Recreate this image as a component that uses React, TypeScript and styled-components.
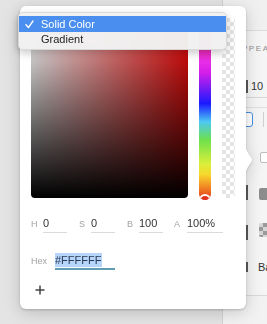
import React from "react";
import styled, { createGlobalStyle } from "styled-components";

const Global = createGlobalStyle`
  html, body { margin: 0; padding: 0; }
  body {
    width: 267px; height: 324px; overflow: hidden;
    font-family: "Liberation Sans", Arial, sans-serif;
    -webkit-font-smoothing: antialiased;
  }
`;

const Page = styled.div`
  position: relative;
  display: flex;
  width: 267px;
  height: 324px;
  overflow: hidden;
`;

const Canvas = styled.div`
  width: 222px;
  flex: none;
  background: #e4e4e4;
`;

const Inspector = styled.div`
  flex: 1;
  display: flex;
  flex-direction: column;
  background: #f5f5f5;
  border-left: 1px solid #d2d2d2;
`;

const InspectorHeader = styled.div`
  height: 30px;
  flex: none;
  border-bottom: 1px solid #dcdcdc;
  background: #f0f0f0;
`;

const SectionTitle = styled.div`
  margin: 13px 0 0 12px;
  font-size: 8px;
  line-height: 10px;
  letter-spacing: 1.6px;
  color: #8e8e8e;
  white-space: nowrap;
`;

const FieldRow = styled.div`
  margin: 26px 0 0 22px;
  height: 17px;
  display: flex;
  align-items: flex-start;
  border-bottom: 1px solid #d8d8d8;
`;

const Bar = styled.div<{ $h: number; $top?: number }>`
  width: 2px;
  height: ${(p) => p.$h}px;
  margin-top: ${(p) => p.$top ?? 0}px;
  background: #5a5a5a;
  flex: none;
`;

const FieldText = styled.span`
  margin-left: 3px;
  font-size: 11px;
  line-height: 13px;
  color: #333;
`;

const Divider = styled.div<{ $top: number }>`
  margin-top: ${(p) => p.$top}px;
  height: 0;
  border-top: 1px solid #e0e0e0;
`;

const SegRow = styled.div`
  margin: 4px 0 0 12px;
  height: 15px;
  display: flex;
  gap: 10px;
`;

const SegButton = styled.div`
  width: 16px;
  height: 13px;
  border: 1px solid #4a90e2;
  border-radius: 3px;
  background: #fff;
`;

const SegSep = styled.div`
  width: 1px;
  background: #d0d0d0;
`;

const Thumb = styled.div`
  margin: 25px 0 0 37px;
  width: 12px;
  height: 9px;
  border: 1px solid #bdbdbd;
  border-radius: 2px;
  background: #fff;
`;

const SwatchRow = styled.div<{ $top: number; $h: number }>`
  margin: ${(p) => p.$top}px 0 0 23px;
  height: ${(p) => p.$h}px;
  display: flex;
  align-items: flex-start;
`;

const Swatch = styled.div<{ $checker?: boolean; $top: number }>`
  margin: ${(p) => p.$top}px 0 0 11px;
  width: 14px;
  height: ${(p) => (p.$checker ? 14 : 12)}px;
  border-radius: 2px;
  background: ${(p) =>
    p.$checker
      ? "repeating-conic-gradient(#9a9a9a 0 25%, #d6d6d6 0 50%) 0 0 / 8px 8px"
      : "#8d8d8d"};
`;

const RowText = styled.span`
  margin-left: 10px;
  font-size: 11px;
  line-height: 10px;
  color: #333;
`;

const Bottom = styled.div`
  flex: 1;
  margin-top: 23px;
  border-top: 1px solid #dadada;
  background: #f2f2f2;
`;

/* ---------- popover ---------- */

const Popover = styled.div`
  position: absolute;
  left: 20px;
  top: 6px;
  width: 226px;
  height: 303px;
  box-sizing: border-box;
  padding: 12px 11px 14px;
  background: #fff;
  border-radius: 6px;
  filter: drop-shadow(0 1px 1px rgba(0, 0, 0, 0.18)) drop-shadow(0 3px 8px rgba(0, 0, 0, 0.18));
  display: flex;
  flex-direction: column;
`;

const Arrow = styled.svg`
  position: absolute;
  right: -7px;
  top: 137px;
`;

const Pickers = styled.div`
  display: flex;
  height: 181px;
  gap: 11px;
`;

const SatVal = styled.div`
  width: 157px;
  height: 180px;
  border-radius: 3px 3px 4px 4px;
  background: linear-gradient(to bottom, rgba(0, 0, 0, 0), #000),
    linear-gradient(to right, #fff, rgba(255, 255, 255, 0)), #f20d0d;
`;

const HueBar = styled.div`
  position: relative;
  width: 12px;
  height: 182px;
  border-radius: 3px 3px 6px 6px;
  overflow: hidden;
  background: linear-gradient(
    to bottom,
    #f01e1e 0%,
    #e82ee8 24%,
    #d51ee8 30%,
    #1a1aff 47%,
    #4cc8f2 57%,
    #6ee04c 67%,
    #d8ef3a 80%,
    #f7d82c 86%,
    #f07a22 94%,
    #e03020 100%
  );
`;

const HueHandle = styled.div`
  position: absolute;
  left: 0;
  bottom: -6px;
  width: 8px;
  height: 8px;
  border: 2px solid #fff;
  border-radius: 50%;
  background: #e03020;
`;

const AlphaBar = styled.div`
  width: 13px;
  height: 180px;
  border-radius: 3px 3px 4px 4px;
  background: repeating-conic-gradient(#e4e4e4 0 25%, #fff 0 50%) 0 0 / 8px 8px;
`;

const Fields = styled.div`
  margin-top: 15px;
  height: 19px;
  display: flex;
`;

const Field = styled.div<{ $w: number }>`
  display: flex;
  width: ${(p) => p.$w}px;
  flex: none;
`;

const Label = styled.span<{ $w: number }>`
  width: ${(p) => p.$w}px;
  flex: none;
  font-size: 9px;
  line-height: 19px;
  padding-top: 1px;
  box-sizing: border-box;
  color: #a2a2a2;
`;

const Input = styled.div<{ $w: number; $focus?: boolean }>`
  width: ${(p) => p.$w}px;
  height: ${(p) => (p.$focus ? 17 : 18)}px;
  box-sizing: content-box;
  border-bottom: ${(p) => (p.$focus ? "2px solid #5e9db2" : "1px solid #dadada")};
  font-size: 11px;
  line-height: 18px;
  color: ${(p) => (p.$focus ? "#2b3a52" : "#333")};
  display: flex;
  align-items: center;
`;

const Selected = styled.span`
  background: #b5d5fb;
  line-height: 14px;
  padding-right: 1px;
`;

const HexRow = styled.div`
  margin-top: 18px;
  height: 18px;
  display: flex;
`;

const AddButton = styled.svg`
  margin: 16px 0 0 4px;
  display: block;
`;

/* ---------- dropdown menu ---------- */

const Menu = styled.div`
  position: absolute;
  left: -2px;
  top: 6px;
  width: 209px;
  box-sizing: border-box;
  padding: 3px 0 3px;
  background: rgba(241, 241, 241, 0.98);
  border: 1px solid rgba(0, 0, 0, 0.1);
  border-radius: 5px;
  box-shadow: 0 3px 9px rgba(0, 0, 0, 0.22);
`;

const MenuItem = styled.div<{ $active?: boolean; $h: number }>`
  position: relative;
  height: ${(p) => p.$h}px;
  display: flex;
  align-items: center;
  padding-left: 22px;
  font-size: 11px;
  color: ${(p) => (p.$active ? "#fff" : "#222")};
  background: ${(p) => (p.$active ? "#4a8ff0" : "transparent")};
`;

const Check = styled.svg`
  position: absolute;
  left: 6px;
  top: 4px;
`;

export default function App() {
  return (
    <>
      <Global />
      <Page>
        <Canvas />
        <Inspector>
          <InspectorHeader />
          <SectionTitle>APPEARANCE</SectionTitle>
          <FieldRow>
            <Bar $h={13} $top={0} style={{ marginLeft: 1 }} />
            <FieldText>10</FieldText>
          </FieldRow>
          <Divider $top={9} />
          <SegRow>
            <SegButton />
            <SegSep />
          </SegRow>
          <Thumb />
          <SwatchRow $top={22} $h={15}>
            <Bar $h={15} />
            <Swatch $top={3} />
          </SwatchRow>
          <SwatchRow $top={23} $h={17}>
            <Bar $h={15} $top={2} />
            <Swatch $checker $top={0} />
          </SwatchRow>
          <SwatchRow $top={22} $h={10}>
            <Bar $h={10} />
            <RowText>Ba</RowText>
          </SwatchRow>
          <Bottom />
        </Inspector>

        <Popover>
          <Arrow width="8" height="34" viewBox="0 0 8 34">
            <path d="M0 0 C0 9 7 14 7 17 C7 20 0 25 0 34 Z" fill="#fff" />
          </Arrow>
          <Pickers>
            <SatVal />
            <HueBar>
              <HueHandle />
            </HueBar>
            <AlphaBar />
          </Pickers>
          <Fields>
            <Field $w={48}>
              <Label $w={12}>H</Label>
              <Input $w={24}>0</Input>
            </Field>
            <Field $w={48}>
              <Label $w={12}>S</Label>
              <Input $w={24}>0</Input>
            </Field>
            <Field $w={47}>
              <Label $w={12}>B</Label>
              <Input $w={24}>100</Input>
            </Field>
            <Field $w={50}>
              <Label $w={13}>A</Label>
              <Input $w={36}>100%</Input>
            </Field>
          </Fields>
          <HexRow>
            <Label $w={24}>Hex</Label>
            <Input $w={60} $focus>
              <Selected>#FFFFFF</Selected>
            </Input>
          </HexRow>
          <AddButton width="10" height="10" viewBox="0 0 10 10">
            <path d="M5 0.5V9.5M0.5 5H9.5" stroke="#444" strokeWidth="1.5" />
          </AddButton>

          <Menu>
            <MenuItem $active $h={16}>
              <Check width="9" height="9" viewBox="0 0 9 9">
                <path
                  d="M1 4.8L3.4 7.6L8 1"
                  fill="none"
                  stroke="#fff"
                  strokeWidth="1.4"
                  strokeLinecap="round"
                  strokeLinejoin="round"
                />
              </Check>
              Solid Color
            </MenuItem>
            <MenuItem $h={14}>Gradient</MenuItem>
          </Menu>
        </Popover>
      </Page>
    </>
  );
}
